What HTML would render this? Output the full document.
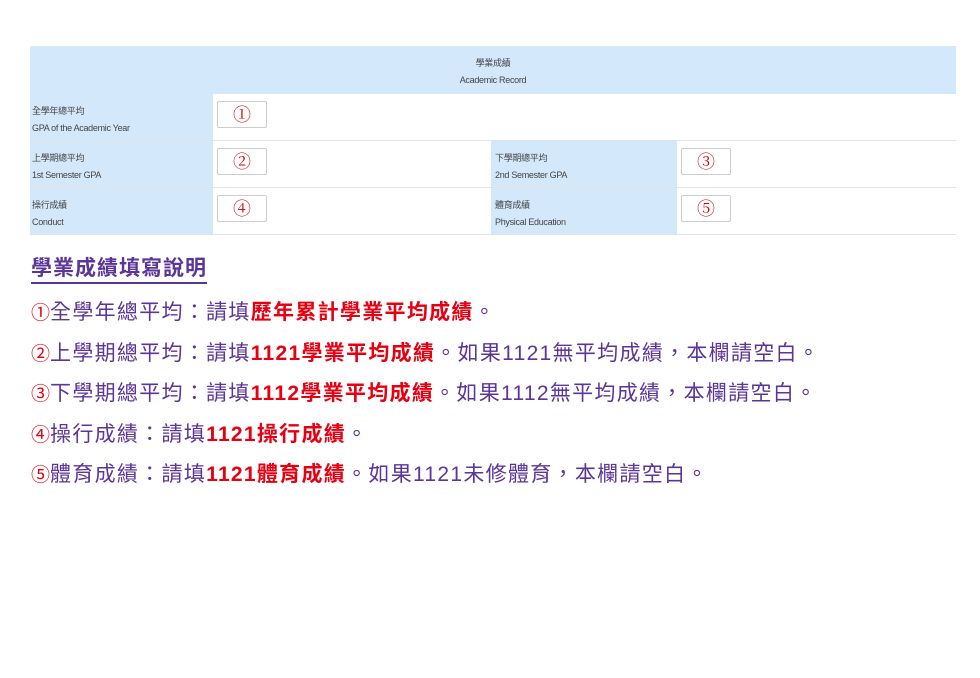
<!DOCTYPE html>
<html><head><meta charset="utf-8"><style>
body{margin:0;width:980px;height:678px;background:#fff;position:relative;font-family:"Liberation Sans","Noto Sans CJK TC",sans-serif;overflow:hidden}
.c{position:absolute;box-sizing:border-box}
.lb{background:#d3e8fb;font-size:9px;color:#444;padding:9px 0 0 2px;line-height:17px;letter-spacing:-0.3px}
.bd{border-bottom:1px solid #e0e4e8}
.in{position:absolute;width:50px;height:27px;border:1px solid #ccc;border-radius:2px;background:#fff;color:#c00;font-size:18px;text-align:center;line-height:27px;font-family:"Liberation Serif","Noto Serif CJK SC",serif;box-sizing:border-box}
.t{position:absolute;left:31px;font-size:21px;letter-spacing:1.3px;color:#5b3598;white-space:nowrap;font-family:"Liberation Sans","Noto Sans CJK TC",sans-serif}
.r{color:#e60012;font-weight:bold}
.n{color:#e60012;font-size:19px;letter-spacing:0}
</style></head><body>
<div class="c lb" style="left:30px;top:46px;width:926px;height:48px;text-align:center;padding:9px 0 0;line-height:17px">學業成績<br>Academic Record</div>
<div class="c lb bd" style="left:30px;top:94px;width:183px;height:47px">全學年總平均<br>GPA of the Academic Year</div>
<div class="c bd" style="left:213px;top:94px;width:743px;height:47px"></div>
<div class="in" style="left:217px;top:101px">①</div>
<div class="c lb bd" style="left:30px;top:141px;width:183px;height:47px">上學期總平均<br>1st Semester GPA</div>
<div class="c bd" style="left:213px;top:141px;width:278px;height:47px"></div>
<div class="in" style="left:217px;top:148px">②</div>
<div class="c lb bd" style="left:491px;top:141px;width:186px;height:47px;padding-left:4px">下學期總平均<br>2nd Semester GPA</div>
<div class="c bd" style="left:677px;top:141px;width:279px;height:47px"></div>
<div class="in" style="left:681px;top:148px">③</div>
<div class="c lb bd" style="left:30px;top:188px;width:183px;height:47px">操行成績<br>Conduct</div>
<div class="c bd" style="left:213px;top:188px;width:278px;height:47px"></div>
<div class="in" style="left:217px;top:195px">④</div>
<div class="c lb bd" style="left:491px;top:188px;width:186px;height:47px;padding-left:4px">體育成績<br>Physical Education</div>
<div class="c bd" style="left:677px;top:188px;width:279px;height:47px"></div>
<div class="in" style="left:681px;top:195px">⑤</div>

<div class="t" style="top:255px;font-size:21px;letter-spacing:1px;font-weight:bold;border-bottom:2px solid #5b3598;line-height:27px">學業成績填寫說明</div>
<div class="t" style="top:296px"><span class="n">①</span>全學年總平均：請填<span class="r">歷年累計學業平均成績</span>。</div>
<div class="t" style="top:337px"><span class="n">②</span>上學期總平均：請填<span class="r">1121學業平均成績</span>。如果1121無平均成績，本欄請空白。</div>
<div class="t" style="top:377px"><span class="n">③</span>下學期總平均：請填<span class="r">1112學業平均成績</span>。如果1112無平均成績，本欄請空白。</div>
<div class="t" style="top:418px"><span class="n">④</span>操行成績：請填<span class="r">1121操行成績</span>。</div>
<div class="t" style="top:458px"><span class="n">⑤</span>體育成績：請填<span class="r">1121體育成績</span>。如果1121未修體育，本欄請空白。</div>
</body></html>
